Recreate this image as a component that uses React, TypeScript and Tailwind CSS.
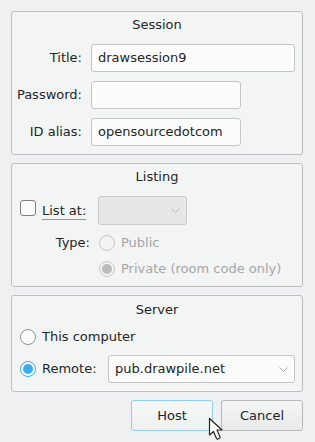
import React from "react";

function Chevron({ color }: { color: string }) {
  return (
    <svg width="9" height="5" viewBox="0 0 9 5" className="block">
      <path d="M0.5 0.5 L4.5 4.5 L8.5 0.5" fill="none" stroke={color} strokeWidth="1" />
    </svg>
  );
}

function Radio({ state }: { state: "off" | "on" | "disabledOn" | "disabledOff" }) {
  if (state === "on") {
    return (
      <div className="w-[16px] h-[16px] rounded-full border border-[#3daee9] bg-[#fcfcfc] flex items-center justify-center shrink-0">
        <div className="w-[10px] h-[10px] rounded-full bg-[#3daee9]" />
      </div>
    );
  }
  if (state === "disabledOn") {
    return (
      <div className="w-[16px] h-[16px] rounded-full border border-[#c4c6c8] bg-[#f2f3f3] flex items-center justify-center shrink-0">
        <div className="w-[10px] h-[10px] rounded-full bg-[#b9bbbd]" />
      </div>
    );
  }
  if (state === "disabledOff") {
    return <div className="w-[16px] h-[16px] rounded-full border border-[#c4c6c8] bg-[#f2f3f3] shrink-0" />;
  }
  return <div className="w-[16px] h-[16px] rounded-full border border-[#8e9193] bg-[#fcfcfc] shrink-0" />;
}

export default function App() {
  return (
    <div className="relative w-[315px] h-[442px] overflow-hidden bg-[#eff0f1] font-['DejaVu_Sans',sans-serif] text-[13px] leading-[16px] text-[#232627] pt-[11px] pl-[11px] pr-[12px] flex flex-col gap-[8px]">
      {/* Session */}
      <div className="h-[144px] border border-[#bdbfc1] rounded-[3px] bg-[#f3f4f4] flex flex-col">
        <div className="mt-[5px] text-center">Session</div>
        <div className="mt-[11px] flex flex-col gap-[9px]">
          <div className="flex items-center h-[28px]">
            <div className="w-[70px] text-right">Title:</div>
            <div className="ml-[9px] w-[204px] h-[28px] border border-[#c3c5c7] rounded-[3px] bg-[#fcfcfc] px-[6px] flex items-center">
              drawsession9
            </div>
          </div>
          <div className="flex items-center h-[28px]">
            <div className="w-[70px] text-right">Password:</div>
            <div className="ml-[9px] w-[150px] h-[28px] border border-[#c3c5c7] rounded-[3px] bg-[#fcfcfc]" />
          </div>
          <div className="flex items-center h-[28px]">
            <div className="w-[70px] text-right">ID alias:</div>
            <div className="ml-[9px] w-[150px] h-[28px] border border-[#c3c5c7] rounded-[3px] bg-[#fcfcfc] px-[6px] flex items-center">
              opensourcedotcom
            </div>
          </div>
        </div>
      </div>

      {/* Listing */}
      <div className="h-[124px] border border-[#bdbfc1] rounded-[3px] bg-[#f3f4f4] flex flex-col">
        <div className="mt-[5px] text-center">Listing</div>
        <div className="mt-[11px] flex items-center h-[29px]">
          <div className="w-[78px] pl-[8px] flex items-center">
            <div className="w-[16px] h-[16px] rounded-[3px] border border-[#7f8284] bg-[#fcfcfc] shrink-0 -mt-[5px]" />
            <span className="ml-[6px] border-b border-[#3daee9] leading-[17px]">List at:</span>
          </div>
          <div className="ml-[8px] w-[89px] h-[29px] border border-[#c9cbcd] rounded-[3px] bg-[#e6e7e8] flex items-center justify-end pr-[6px]">
            <Chevron color="#b4b6b8" />
          </div>
        </div>
        <div className="mt-[5px] flex items-center h-[26px]">
          <div className="w-[78px] text-right">Type:</div>
          <div className="ml-[9px] flex items-center">
            <Radio state="disabledOff" />
            <span className="ml-[6px] text-[#a4a6a8]">Public</span>
          </div>
        </div>
        <div className="flex items-center h-[26px]">
          <div className="w-[78px]" />
          <div className="ml-[9px] flex items-center">
            <Radio state="disabledOn" />
            <span className="ml-[6px] text-[#a4a6a8]">Private (room code only)</span>
          </div>
        </div>
      </div>

      {/* Server */}
      <div className="h-[97px] border border-[#bdbfc1] rounded-[3px] bg-[#f3f4f4] flex flex-col">
        <div className="mt-[6px] text-center">Server</div>
        <div className="mt-[5px] flex items-center h-[28px] pl-[8px]">
          <Radio state="off" />
          <span className="ml-[6px]">This computer</span>
        </div>
        <div className="mt-[4px] flex items-center h-[28px] pl-[8px] pr-[7px]">
          <Radio state="on" />
          <span className="ml-[6px]">Remote:</span>
          <div className="ml-auto w-[187px] h-[28px] border border-[#c3c5c7] rounded-[3px] bg-[#fcfcfc] flex items-center pl-[6px] pr-[6px]">
            <span className="flex-1">pub.drawpile.net</span>
            <Chevron color="#a9abad" />
          </div>
        </div>
      </div>

      {/* Buttons */}
      <div className="flex justify-end gap-[8px]">
        <div className="w-[82px] h-[31px] border border-[#93cee9] rounded-[3px] bg-gradient-to-b from-[#f7f8f8] to-[#eef0f0] flex items-center justify-center">
          Host
        </div>
        <div className="w-[82px] h-[31px] border border-[#b6b8ba] rounded-[3px] bg-gradient-to-b from-[#f4f5f5] to-[#e9eaeb] flex items-center justify-center">
          Cancel
        </div>
      </div>

      {/* Mouse cursor */}
      <svg
        className="absolute left-[208px] top-[417px]"
        width="16"
        height="25"
        viewBox="0 0 16 25"
      >
        <path
          d="M1.5 1.5 L1.5 18 L5.5 14.5 L8.5 21.5 Q9 22.5 10 22 L11.5 21.3 Q12.5 20.8 12 19.8 L9 13 L14 13 Z"
          fill="#fcfcfc"
          stroke="#232627"
          strokeWidth="1.2"
          strokeLinejoin="round"
        />
      </svg>
    </div>
  );
}
